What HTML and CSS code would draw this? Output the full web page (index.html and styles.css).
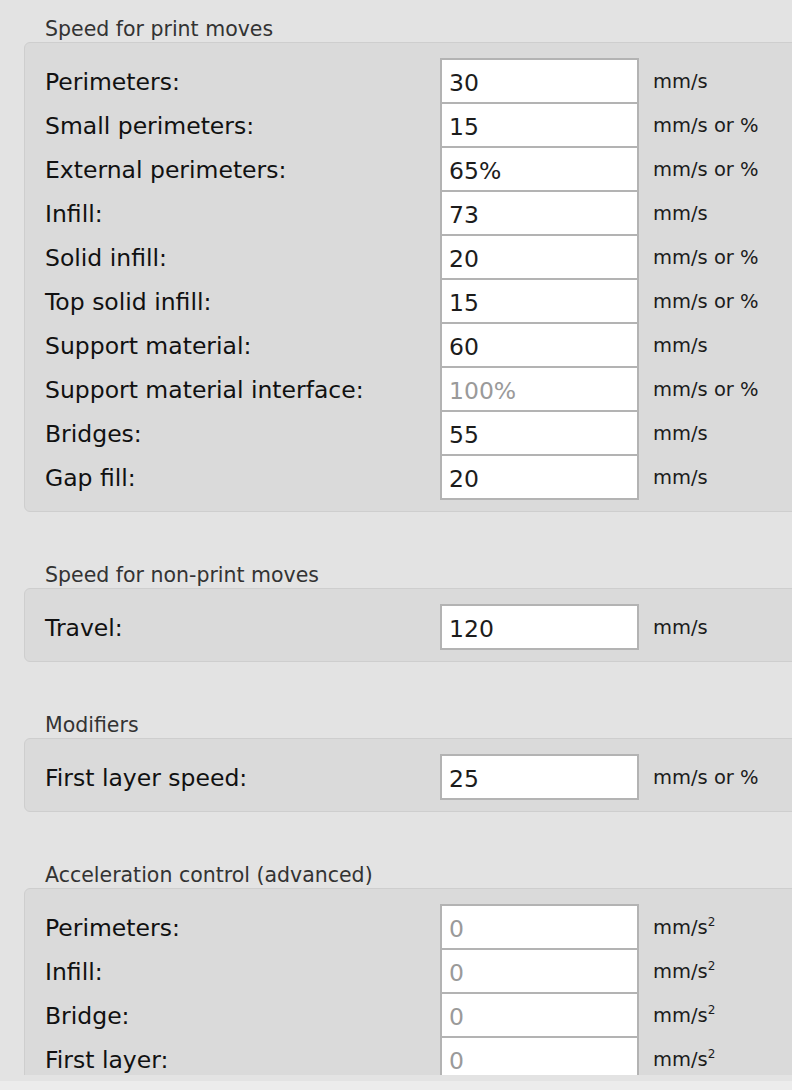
FILE: index.html
```html
<!DOCTYPE html>
<html lang="en">
<head>
    <meta charset="UTF-8">
    <title>Print settings - Speed</title>
    <link rel="stylesheet" href="styles.css">
</head>
<body>
    <div class="scroll">

        <!-- Speed for print moves -->
        <section class="group">
            <h2 class="group-title">Speed for print moves</h2>
            <div class="panel">
                <div class="row"><label>Perimeters:</label><input type="text" value="30"><span class="unit">mm/s</span></div>
                <div class="row"><label>Small perimeters:</label><input type="text" value="15"><span class="unit">mm/s or %</span></div>
                <div class="row"><label>External perimeters:</label><input type="text" value="65%"><span class="unit">mm/s or %</span></div>
                <div class="row"><label>Infill:</label><input type="text" value="73"><span class="unit">mm/s</span></div>
                <div class="row"><label>Solid infill:</label><input type="text" value="20"><span class="unit">mm/s or %</span></div>
                <div class="row"><label>Top solid infill:</label><input type="text" value="15"><span class="unit">mm/s or %</span></div>
                <div class="row"><label>Support material:</label><input type="text" value="60"><span class="unit">mm/s</span></div>
                <div class="row"><label>Support material interface:</label><input type="text" class="dim" value="100%"><span class="unit">mm/s or %</span></div>
                <div class="row"><label>Bridges:</label><input type="text" value="55"><span class="unit">mm/s</span></div>
                <div class="row"><label>Gap fill:</label><input type="text" value="20"><span class="unit">mm/s</span></div>
            </div>
        </section>

        <!-- Speed for non-print moves -->
        <section class="group">
            <h2 class="group-title">Speed for non-print moves</h2>
            <div class="panel">
                <div class="row"><label>Travel:</label><input type="text" value="120"><span class="unit">mm/s</span></div>
            </div>
        </section>

        <!-- Modifiers -->
        <section class="group">
            <h2 class="group-title">Modifiers</h2>
            <div class="panel">
                <div class="row"><label>First layer speed:</label><input type="text" value="25"><span class="unit">mm/s or %</span></div>
            </div>
        </section>

        <!-- Acceleration control -->
        <section class="group">
            <h2 class="group-title">Acceleration control (advanced)</h2>
            <div class="panel">
                <div class="row"><label>Perimeters:</label><input type="text" class="dim" value="0"><span class="unit">mm/s<sup>2</sup></span></div>
                <div class="row"><label>Infill:</label><input type="text" class="dim" value="0"><span class="unit">mm/s<sup>2</sup></span></div>
                <div class="row"><label>Bridge:</label><input type="text" class="dim" value="0"><span class="unit">mm/s<sup>2</sup></span></div>
                <div class="row"><label>First layer:</label><input type="text" class="dim" value="0"><span class="unit">mm/s<sup>2</sup></span></div>
            </div>
        </section>

    </div>
    <div class="status"></div>
</body>
</html>
```

FILE: styles.css
```css
html, body {
    margin: 0;
    padding: 0;
    overflow: hidden;
}

body {
    background-color: #e3e3e3;
    font-family: "DejaVu Sans", sans-serif;
    color: #1c1c1c;
}

.scroll {
    height: 1075px;
    overflow: hidden;
    padding: 14px 0 0 24px;
    box-sizing: border-box;
}

.group {
    margin-bottom: 48px;
}

.group-title {
    margin: 0;
    padding: 1px 0 0 21px;
    height: 28px;
    box-sizing: border-box;
    line-height: 28px;
    font-size: 20.5px;
    font-weight: normal;
    color: #333333;
}

.panel {
    margin-right: -30px;
    padding: 16px 0 12px 20px;
    background-color: #dadada;
    border: 1px solid #cecece;
    border-radius: 6px;
}

.row {
    display: flex;
    align-items: center;
    height: 44px;
}

.row label {
    width: 395px;
    flex-shrink: 0;
    padding-top: 2px;
    font-size: 23.5px;
    color: #111111;
}

.row input {
    box-sizing: border-box;
    width: 199px;
    height: 46px;
    margin: -1px 0;
    padding: 4px 0 0 7px;
    border: 2px solid #b3b3b3;
    border-radius: 0;
    background-color: #ffffff;
    font-family: "DejaVu Sans", sans-serif;
    font-size: 23.5px;
    color: #1c1c1c;
    outline: none;
}

.row input.dim {
    color: #9a9a9a;
}

.unit {
    margin-left: 14px;
    padding-top: 1px;
    font-size: 19.5px;
    color: #1c1c1c;
}

.unit sup {
    font-size: 12px;
    vertical-align: 8px;
    line-height: 0;
}

.status {
    height: 15px;
    border-top: 6px solid #e3e3e3;
    background-color: #ececec;
    box-sizing: border-box;
}
```
